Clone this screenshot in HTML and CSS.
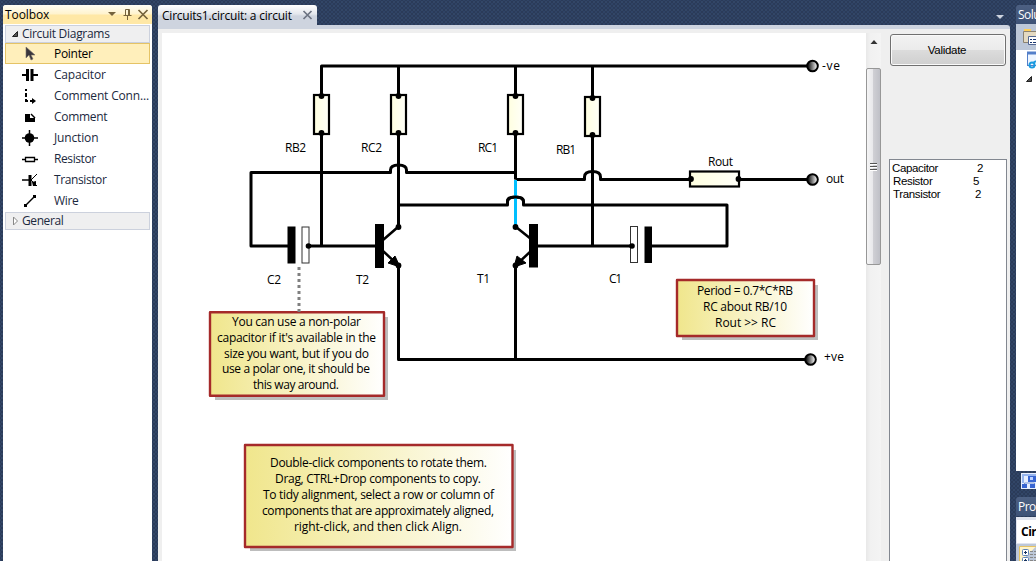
FILE: index.html
```html
<!DOCTYPE html>
<html lang="en">
<head>
<meta charset="utf-8">
<title>Circuits1.circuit: a circuit</title>
<link rel="stylesheet" href="styles.css">
</head>
<body>
<div class="ide">
  <aside class="toolbox">
    <header class="toolbox-title"><span class="title-text">Toolbox</span>
      <svg class="title-icons" width="46" height="19" viewBox="0 0 46 19"><path d="M3 7h8l-4 4z" fill="#75633d"/><path d="M20.500 4.500h4v6h-4zM23.500 4v7M18.500 10.500h8M22.500 11v4" fill="none" stroke="#75633d"/><path d="M33.500 5l9 9M42.500 5l-9 9" stroke="#75633d" stroke-width="1.700"/></svg>
    </header>
    <div class="group"><svg width="10" height="10"><path d="M2.500 7.500h5v-5z" fill="#555" stroke="#222"/></svg><span class="g1">Circuit Diagrams</span></div>
    <ul class="tools">
      <li class="selected"><svg width="18" height="16"><path d="M5 1v11l3-3 2 5 2-1-2-4h4z" fill="#39353b" stroke="#77716a" stroke-width=".6"/></svg><span>Pointer</span></li>
      <li><svg width="18" height="16"><path d="M1 8h5M11 8h6" stroke="#000" stroke-width="2"/><path d="M6.500 2v12M11 2v12" stroke="#000" stroke-width="3"/></svg><span class="t-cap">Capacitor</span></li>
      <li><svg width="18" height="16"><path d="M5 1v2M5 5v4M5 11v2h2M9 13h3" fill="none" stroke="#000" stroke-width="2"/><path d="M11 10l4 3-4 3z"/></svg><span class="t-conn">Comment Conn...</span></li>
      <li><svg width="18" height="16"><path d="M4 5h5v4h5v4H4z"/><path d="M10 5l4 4" stroke="#000" stroke-width="1.500"/></svg><span class="t-comment">Comment</span></li>
      <li><svg width="18" height="16"><circle cx="8.500" cy="8" r="4.800"/><path d="M1 8h16M8.500 0v16" stroke="#000" stroke-width="1.500"/></svg><span class="t-junction">Junction</span></li>
      <li><svg width="18" height="16"><path d="M1 8.500h3M14 8.500h3M4.500 6.500h9v4h-9z" fill="none" stroke="#000" stroke-width="1.300"/></svg><span class="t-resistor">Resistor</span></li>
      <li><svg width="18" height="16"><path d="M1 8h8" stroke="#000" stroke-width="1.500"/><path d="M9 3v11" stroke="#000" stroke-width="3"/><path d="M10 8l6-6M10 8l6 6" stroke="#000"/><path d="M11 10l4-1v5h-3z"/></svg><span class="t-transistor">Transistor</span></li>
      <li><svg width="18" height="16"><path d="M4.500 12.500L13.500 3.500" stroke="#000" stroke-width="1.500"/><path d="M3 11h3v3H3zM12 2h3v3h-3z"/></svg><span class="t-wire">Wire</span></li>
    </ul>
    <div class="group last"><svg width="10" height="10"><path d="M3.500 1l4 4-4 4z" fill="#fff" stroke="#888"/></svg><span class="g2">General</span></div>
  </aside>

  <section class="document">
    <div class="tabs">
      <div class="tab"><span>Circuits1.circuit: a circuit</span><svg width="11" height="10"><path d="M1.500 1l8 8M9.500 1l-8 8" stroke="#6c7382" stroke-width="1.700"/></svg></div>
      <svg class="tab-menu" width="8" height="4"><path d="M0 0h8L4 4z" fill="#ced4df"/></svg>
    </div>
    <div class="workspace">
      <svg class="canvas" width="704" height="528" viewBox="162 33 704 528">
        <defs>
          <linearGradient id="note"><stop offset="0" stop-color="#f0e68c"/><stop offset="1" stop-color="#fff"/></linearGradient>
          <linearGradient id="body"><stop offset="0" stop-color="#ffffe0"/><stop offset="1" stop-color="#fffff8"/></linearGradient>
          <linearGradient id="term"><stop offset=".15" stop-color="#222"/><stop offset=".95" stop-color="#fff"/></linearGradient>
          <g id="res"><rect x="-7.500" y="0" width="15" height="39" fill="url(#body)" stroke="#000" stroke-width="2.200"/><circle cy="1" r="2.900"/><circle cy="38" r="2.900"/></g>
        </defs>
        <g class="wires">
          <path d="M321.500 96V66H808M398.500 96V66M515.500 96V66M592.500 98V66"/>
          <path d="M321.500 134V246M398.500 134V227M515.500 134V179.500M592.500 136V246"/>
          <path d="M288 246H251V172.500H390.500V170Q390.500 165 398.500 165T406.500 170V172.500H515.500"/>
          <path d="M515.500 179.500H584.500V177Q584.500 171.500 592.500 171.500T600.500 177V179.500H690M739 179.500H808"/>
          <path d="M398.500 205H507.500V201.500Q507.500 197 515.500 197T523.500 201.500V205H727V246H652"/>
          <path d="M308 246H375M538 246H632"/>
          <path d="M398.500 265V359.500H807M515.500 265V359.500"/>
          <path d="M383 240L398 227M383 251L398 265M531 239L516 227M531 251L516 265" stroke-width="2.500"/>
        </g>
        <path d="M515.500 180V227" stroke="#00bfff" stroke-width="3"/>
        <path class="wires" d="M507.500 205V201.500Q507.500 197 515.500 197T523.500 201.500V205"/>
        <use href="#res" x="321.500" y="95"/><use href="#res" x="398.500" y="95"/><use href="#res" x="515.500" y="95"/><use href="#res" x="592.500" y="97"/>
        <rect x="690" y="171.500" width="49" height="15" fill="url(#body)" stroke="#000" stroke-width="2.200"/><circle cx="691" cy="179" r="2.900"/><circle cx="738.500" cy="179" r="2.900"/>
        <path d="M287.500 226.500h8v37h-8zM644.500 226.500h7.500v36.500h-7.500zM375 224h9v44h-9zM529 224h9v43.500h-9z"/>
        <g fill="#fff" stroke="#333"><rect x="302" y="227" width="7" height="36"/><rect x="630.500" y="226.500" width="7" height="36"/></g>
        <circle cx="308.500" cy="246" r="2.800"/><circle cx="632" cy="246" r="2.800"/><circle cx="398.500" cy="227" r="2.900"/><circle cx="398.500" cy="265.500" r="2.900"/><circle cx="515.500" cy="227" r="2.900"/><circle cx="515.500" cy="265.500" r="2.900"/>
        <path d="M400 267l-12-4 7-7zM514 267l12-4-9-7z" stroke="#000"/>
        <g fill="url(#term)" stroke="#000" stroke-width="2"><circle cx="812.500" cy="66" r="5.300"/><circle cx="812.500" cy="179.500" r="5.300"/><circle cx="810.500" cy="359.500" r="5.300"/></g>
        <g fill="#bdbdbd"><rect x="215" y="317" width="173" height="83"/><rect x="682" y="285" width="136" height="55"/><rect x="250" y="450" width="266" height="101"/></g>
        <g fill="url(#note)" stroke="#a52a2a" stroke-width="2.400" stroke-linejoin="round"><rect x="210" y="312.200" width="174" height="83.500"/><rect x="677" y="280" width="137" height="56"/><rect x="245" y="445" width="267.500" height="102"/></g>
        <path d="M299 267V314" stroke="#808080" stroke-width="3" stroke-dasharray="3 3"/>
        <g class="labels">
          <text x="285" y="152" textLength="21">RB2</text><text x="361" y="152" textLength="21">RC2</text><text x="478" y="152" textLength="20">RC1</text><text x="556" y="154" textLength="20">RB1</text>
          <text x="708" y="166" textLength="25">Rout</text><text x="822" y="70" textLength="18">-ve</text><text x="826" y="183" textLength="18">out</text><text x="824" y="361" textLength="20">+ve</text>
          <text x="267" y="284" textLength="14">C2</text><text x="356" y="284" textLength="13">T2</text><text x="477" y="283" textLength="13">T1</text><text x="609" y="283" textLength="13">C1</text>
          <text x="697" y="295" textLength="96">Period = 0.7*C*RB</text><text x="703" y="311" textLength="84">RC about RB/10</text><text x="715" y="327" textLength="61">Rout &gt;&gt; RC</text>
          <text x="232" y="326" textLength="129">You can use a non-polar</text><text x="217" y="342" textLength="159">capacitor if it's available in the</text><text x="224" y="358" textLength="145">size you want, but if you do</text><text x="222" y="373" textLength="148">use a polar one, it should be</text><text x="253" y="389" textLength="86">this way around.</text>
          <text x="270" y="467" textLength="217">Double-click components to rotate them.</text><text x="275" y="483" textLength="206">Drag, CTRL+Drop components to copy.</text><text x="263" y="499" textLength="231">To tidy alignment, select a row or column of</text><text x="262" y="515" textLength="232">components that are approximately aligned,</text><text x="294" y="531" textLength="168">right-click, and then click Align.</text>
        </g>
      </svg>
      <div class="scrollbar"><svg width="15" height="35"><path d="M4.500 11h7L8 7z" fill="#333"/></svg><div class="thumb"><i></i><i></i><i></i></div></div>
      <div class="panel">
        <button class="validate">Validate</button>
        <div class="counts">
          <div><span class="c1">Capacitor</span><b>2</b></div>
          <div><span class="c2">Resistor</span><b>5</b></div>
          <div><span class="c3">Transistor</span><b>2</b></div>
        </div>
      </div>
    </div>
  </section>

  <aside class="dock">
    <div class="dock-title">Solu</div>
    <div class="dock-tools"><svg width="20" height="26"><rect x="8" y="5" width="7" height="5" fill="#ffcf58"/><path d="M7.500 7.500h13v11h-13z" fill="#e4dac2" stroke="#8c8371"/><path d="M12.500 12.500h9v8h-9z" fill="#fff" stroke="#526793"/><path d="M14 15.500h2M17 15.500h3M14 18.500h2M17 18.500h3" stroke="#19366f"/></svg></div>
    <div class="tree"><svg width="20" height="40"><rect x="11.500" y="2.500" width="12" height="13" fill="#edf5ff" stroke="#537fc9"/><path d="M11 3h9" stroke="#537fc9" stroke-width="3"/><circle cx="16" cy="15" r="2.500" fill="none" stroke="#1b9be0" stroke-width="2"/><path d="M17 13l3-2" stroke="#1b9be0" stroke-width="2"/><path d="M10.500 31.500h5v-5z" fill="#555" stroke="#222"/></svg></div>
    <div class="dock-tabs"><svg width="20" height="26"><rect x="5" y="2" width="15" height="16" fill="#e8efff"/><path d="M7 4h13M7 3v9" stroke="#97b5ee" stroke-width="2"/><path d="M12 5h8v6h-8z" fill="#3865d2"/><path d="M14 6h3v3h-3z" fill="#bdd2ff"/><path d="M8.500 14v-2h10v2" fill="none" stroke="#7b94cc"/><path d="M6 13h5v4H6zM14 13h5v4h-5z" fill="#3865d2"/></svg></div>
    <div class="dock-title">Pro</div>
    <div class="object-name">Cir</div>
    <div class="prop-tools"><svg width="20" height="17"><path d="M3.500 17V.500H20" fill="#fff4ca" stroke="#e5c365"/><rect x="6.500" y="3.500" width="6" height="6" rx="1" fill="#fff" stroke="#5c83b7"/><rect x="6.500" y="11.500" width="6" height="6" rx="1" fill="#fff" stroke="#5c83b7"/><path d="M8 6.500h3M9.500 5v3M8 14.500h3M9.500 13v3" stroke="#17335e"/><path d="M14 5.500h6M14 8.500h6M14 11.500h6M14 14.500h6" stroke="#888" stroke-dasharray="3 1"/></svg></div>
  </aside>
</div>
</body>
</html>
```
FILE: styles.css
```css
* { box-sizing: border-box; }
html { height: 565px; background: #fff; }
body { margin: 0; width: 1036px; height: 565px; overflow: hidden; background: #fff; font: 12px "Open Sans", "Noto Sans", sans-serif; color: #1b293e; }
svg { display: block; flex: none; }
.ide { display: flex; width: 1036px; height: 561px; padding: 5px 0 0 3px; overflow: hidden; background-color: #2b3b59; background-image: radial-gradient(#364a6c .6px, transparent 1px), radial-gradient(#32466a .6px, transparent 1px); background-size: 4px 4px; background-position: 0 0, 2px 2px; white-space: nowrap; }
.toolbox { width: 149px; background: #fff; border-radius: 3px 3px 0 0; margin-right: 6px; }
.toolbox-title { display: flex; height: 19px; align-items: center; justify-content: space-between; padding: 0 1px 0 2px; background: linear-gradient(#fffdf4 0, #fff3cd 48%, #ffe8a6 52%, #ffe8a6); border-radius: 3px 3px 0 0; color: #000; }
.title-text { letter-spacing: -.1px; }
.group { display: flex; align-items: center; height: 18px; margin: 1px 2px 0; padding-left: 4px; gap: 2px; border: 1px solid #ccd1dd; background: #efeff0; line-height: 16px; }
.tools { list-style: none; margin: 0; padding: 0 2px; }
.tools li { display: flex; align-items: center; height: 21px; padding-left: 15px; gap: 15px; border: 1px solid transparent; }
.tools .selected { background: #ffefbb; border-color: #e5c365; color: #000; }
.g1 { letter-spacing: -.3px; }
.g2 { letter-spacing: -.4px; }
.tools span { letter-spacing: -.3px; }
.tools .t-cap { letter-spacing: -.2px; }
.tools .t-conn { letter-spacing: -.17px; }
.tools .t-junction { letter-spacing: -.15px; }
.tools .t-resistor, .tools .t-transistor { letter-spacing: -.4px; }

.document { width: 852px; display: flex; flex-direction: column; margin-right: 6px; }
.tabs { display: flex; height: 20px; justify-content: space-between; align-items: end; flex: none; }
.tab { display: flex; width: 159px; height: 20px; align-items: center; justify-content: space-between; padding: 0 4px 0 4px; color: #000; background: linear-gradient(#fff, #e4e7ed 45%, #ced4df 55%, #ced4df); border-radius: 3px 3px 0 0; letter-spacing: -.22px; }
.tab-menu { margin: 0 6px 6px 0; }
.workspace { display: flex; flex: 1; min-height: 0; border-top: 4px solid #ced4df; border-top-right-radius: 3px; background: #efefef; padding: 4px 0 0 4px; }
.canvas { background: #fff; }
.wires { fill: none; stroke: #000; stroke-width: 3; stroke-linejoin: round; }
.labels { fill: #000; font-size: 12px; }
.scrollbar { width: 15px; background: linear-gradient(90deg, #e8e8e8, #f1f1f1 30%, #f4f4f4); }
.thumb { height: 197px; border: 1px solid #979797; border-radius: 2px; background: linear-gradient(90deg, #f5f5f5, #e8e8eb 45%, #cfcfd4 50%, #bfc0c7); display: flex; flex-direction: column; align-items: center; justify-content: center; gap: 2px; }
.thumb i { width: 7px; height: 1px; background: #555; box-shadow: 0 1px #fff; }
.panel { width: 129px; padding: 1px 3px 0 8px; display: flex; flex-direction: column; }
.validate { height: 32px; margin: 0 1px; border: 1px solid #707070; border-radius: 3px; box-shadow: inset 0 0 0 1px #fafafa; background: linear-gradient(#f2f2f2, #ebebeb 49%, #dcdcdc 50%, #cfcfcf); font: 11.5px "Liberation Sans", sans-serif; letter-spacing: -.3px; color: #000; padding: 0 2px 0 0; }
.counts { flex: 1; margin-top: 93px; border: 1px solid #828790; border-bottom: 0; background: #fff; padding: 2px 2px; color: #000; font: 11.5px/13px "Liberation Sans", sans-serif; }
.counts div { display: flex; }
.counts span { width: 85px; letter-spacing: -.35px; }
.counts b { font-weight: normal; }
.counts .c2, .counts .c3 { padding-left: 1px; }
.counts .c2 { width: 81px; }
.counts .c3 { width: 83px; }

.dock { width: 20px; overflow: hidden; flex: none; }
.dock-title { height: 19px; padding-left: 2px; line-height: 19px; color: #fff; background: linear-gradient(#4d6082, #3d5277); border-top-left-radius: 3px; letter-spacing: -.5px; }
.dock-tools { height: 26px; background: #bcc7d8; }
.tree { height: 421px; background: #fff; }
.dock-tabs { height: 26px; }
.object-name { height: 27px; margin-top: 1px; padding-left: 4px; border: 1px solid #e0e4ef; border-width: 3px 0 1px 1px; background: #fff; line-height: 23px; font-weight: bold; color: #000; letter-spacing: -.5px; }
.prop-tools { height: 18px; padding-top: 2px; background: #bcc7d8; }
```
